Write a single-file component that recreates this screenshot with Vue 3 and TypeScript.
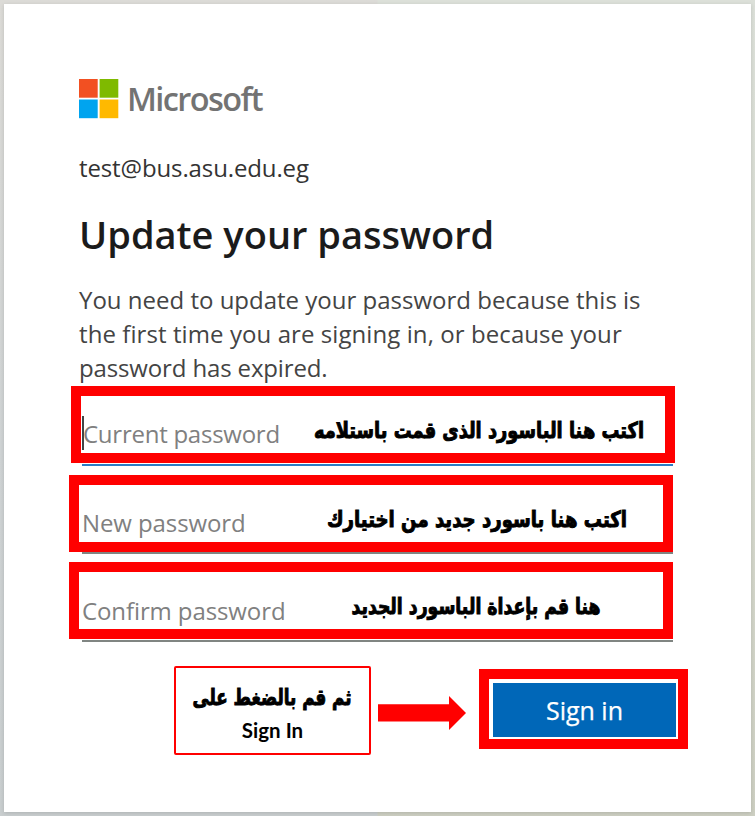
<script setup lang="ts">
interface Field {
  id: string
  label: string
  note: string
  noteX: number
  noteWidth: number
}

const fields: Field[] = [
  { id: 'current', label: 'Current password', note: 'اكتب هنا الباسورد الذى قمت باستلامه', noteX: 479, noteWidth: 330 },
  { id: 'new', label: 'New password', note: 'اكتب هنا باسورد جديد من اختيارك', noteX: 477, noteWidth: 300 },
  { id: 'confirm', label: 'Confirm password', note: 'هنا قم بإعداة الباسورد الجديد', noteX: 476, noteWidth: 249 },
]
</script>

<template>
  <div class="page">
    <main class="card">
      <div class="brand">
        <svg class="logo" width="40" height="40" viewBox="0 0 40 40">
          <rect x="0" y="0" width="18.7" height="18.7" fill="#f25022" />
          <rect x="20.6" y="0" width="18.7" height="18.7" fill="#7fba00" />
          <rect x="0" y="20.5" width="18.7" height="18.7" fill="#00a4ef" />
          <rect x="20.6" y="20.5" width="18.7" height="18.7" fill="#ffb900" />
        </svg>
        <span class="brand-name">Microsoft</span>
      </div>
      <div class="email">test@bus.asu.edu.eg</div>
      <h1>Update your password</h1>
      <p class="intro">
        <span class="l1">You need to update your password because this is</span>
        <span class="l2">the first time you are signing in, or because your</span>
        <span class="l3">password has expired.</span>
      </p>
      <div v-for="f in fields" :key="f.id" class="field" :class="f.id">
        <div class="frame">
          <span v-if="f.id === 'current'" class="caret"></span>
          <span class="label">{{ f.label }}</span>
          <svg class="note" width="584" height="57" :viewBox="`${f.id === 'current' ? 81 : 79} 0 584 57`">
            <text :x="f.noteX" y="42" :textLength="f.noteWidth" lengthAdjust="spacingAndGlyphs">{{ f.note }}</text>
          </svg>
        </div>
        <div class="underline"></div>
      </div>
      <div class="actions">
        <div class="hint">
          <svg width="193" height="44" viewBox="0 0 193 44">
            <text x="96" y="37" textLength="159" lengthAdjust="spacingAndGlyphs">ثم قم بالضغط على</text>
          </svg>
          <span class="hint-en">Sign In</span>
        </div>
        <svg class="arrow" width="88" height="34" viewBox="0 0 88 34">
          <path d="M0 8.3H71V0L88 17L71 34V25.4H0Z" fill="#f00" />
        </svg>
        <div class="target">
          <button type="button">Sign in</button>
        </div>
      </div>
    </main>
  </div>
</template>

<style>
body {
  margin: 0;
}
</style>

<style scoped>
* {
  box-sizing: border-box;
}
.page {
  width: 755px;
  height: 816px;
  padding: 4px;
  background:
    linear-gradient(180deg, #dcdbd7 0%, #cfd3d4 55%, #c9cecf 100%) left / 50% 100% no-repeat,
    linear-gradient(180deg, #dce0d9 0%, #d6d9ce 55%, #cdcfc2 100%);
  font-family: "Open Sans", "Noto Sans", sans-serif;
}
.card {
  width: 747px;
  height: 808px;
  background: #fff;
  padding: 74px 0 0 65px;
  box-shadow: 0 1px 4px rgba(0, 0, 0, 0.14);
  color: #1b1b1b;
}
.brand {
  display: flex;
  height: 40px;
  padding-left: 10px;
  gap: 8px;
}
.logo {
  display: block;
  margin-top: 0.5px;
}
.brand-name {
  color: #737373;
  font-size: 32.5px;
  font-weight: 600;
  line-height: 41px;
  letter-spacing: -1.6px;
}
.email {
  height: 34px;
  margin-top: 33px;
  padding-left: 10px;
  font-size: 24px;
  line-height: 34px;
  letter-spacing: -0.12px;
  color: #333;
}
h1 {
  margin: 24px 0 0;
  padding-left: 10px;
  height: 50px;
  line-height: 50px;
  font-size: 38px;
  font-weight: 600;
  letter-spacing: 0;
  white-space: nowrap;
}
.intro {
  margin: 24px 0 0;
  padding-left: 10px;
  font-size: 24px;
  line-height: 34px;
  height: 103px;
  color: #444;
}
.intro span {
  display: block;
  white-space: nowrap;
}
.l2 {
  letter-spacing: 0.08px;
}
.l3 {
  letter-spacing: -0.14px;
}
.field {
  width: 604px;
  height: 87px;
}
.field.current {
  width: 606px;
  height: 89px;
  padding-left: 2px;
}
.frame {
  display: flex;
  align-items: center;
  width: 604px;
  height: 77px;
  border: 10px solid #f00;
  position: relative;
}
.label {
  padding-left: 3px;
  padding-top: 18px;
  font-size: 24px;
  line-height: 34px;
  letter-spacing: -0.1px;
  color: #808080;
  white-space: nowrap;
}
.current .label {
  padding-left: 2px;
  letter-spacing: -0.25px;
}
.confirm .label {
  padding-top: 20px;
}
.caret {
  position: absolute;
  left: 1px;
  top: 20px;
  width: 2px;
  height: 34px;
  background: #444;
}
.note {
  position: absolute;
  left: 0;
  top: 0;
  overflow: visible;
}
.note text,
.hint text {
  font-family: "DejaVu Sans", sans-serif;
  font-weight: 700;
  font-size: 22px;
  direction: rtl;
  text-anchor: middle;
  fill: #000;
  stroke: #000;
  stroke-width: 1px;
}
.underline {
  height: 2px;
  width: 591px;
  margin-left: 13px;
  background: #808582;
}
.current .underline {
  margin: 1px 0 0 11px;
  background: #2b7cc4;
}
.confirm .underline {
  margin-top: 1px;
}
.actions {
  display: flex;
  align-items: flex-start;
  padding-left: 105px;
  margin-top: 16px;
}
.hint {
  width: 197px;
  height: 89px;
  margin-top: 1px;
  border: 2px solid #f00;
  border-radius: 2px;
  display: flex;
  flex-direction: column;
  align-items: center;
}
.hint svg {
  display: block;
  overflow: visible;
}
.hint-en {
  font-family: Lato, sans-serif;
  font-weight: 700;
  font-size: 20.5px;
  line-height: 24px;
  margin-top: 6px;
  color: #000;
}
.arrow {
  margin: 31px 13px 0 7px;
}
.target {
  width: 209px;
  height: 80px;
  margin-top: 4px;
  padding: 4px;
  border: 10px solid #f00;
}
button {
  display: block;
  width: 183px;
  height: 54px;
  padding: 1px 0 0;
  border: 0;
  background: #0067b8;
  color: #fff;
  font-family: inherit;
  font-size: 25px;
  line-height: 53px;
  -webkit-text-stroke: 0.25px #fff;
}
</style>
